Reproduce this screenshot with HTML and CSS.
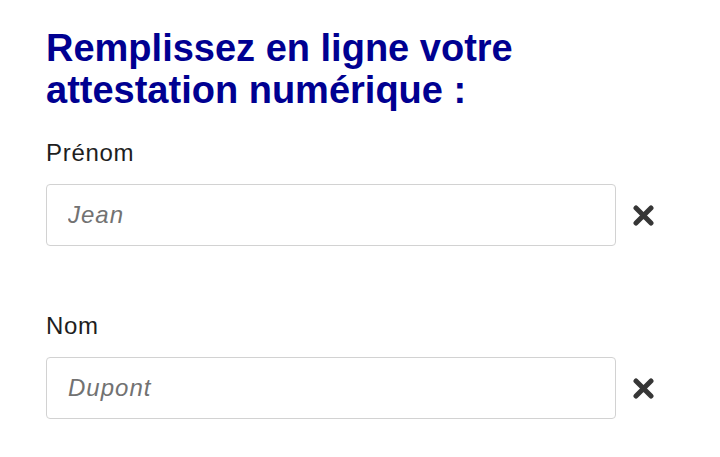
FILE: index.html
```html
<!DOCTYPE html>
<html lang="fr">
<head>
<meta charset="utf-8">
<title>Attestation numérique</title>
<link rel="stylesheet" href="styles.css">
</head>
<body>
<main class="page">
  <h1 class="title">Remplissez en ligne votre attestation numérique :</h1>
  <div class="field">
    <label class="label" for="prenom">Prénom</label>
    <div class="row">
      <input class="input" id="prenom" type="text" placeholder="Jean">
      <span class="clear" aria-label="Effacer">
        <svg width="21" height="21" viewBox="0 0 21 21"><path d="M3 3 L18 18 M18 3 L3 18" stroke="#363636" stroke-width="5" stroke-linecap="round" fill="none"/></svg>
      </span>
    </div>
  </div>
  <div class="field">
    <label class="label" for="nom">Nom</label>
    <div class="row">
      <input class="input" id="nom" type="text" placeholder="Dupont">
      <span class="clear" aria-label="Effacer">
        <svg width="21" height="21" viewBox="0 0 21 21"><path d="M3 3 L18 18 M18 3 L3 18" stroke="#363636" stroke-width="5" stroke-linecap="round" fill="none"/></svg>
      </span>
    </div>
  </div>
</main>
</body>
</html>
```
FILE: styles.css
```css
html, body {
  margin: 0;
  padding: 0;
  background: #ffffff;
}
.page {
  padding: 27px 0 0 46px;
  font-family: "Liberation Sans", Arial, sans-serif;
}
.title {
  margin: 0 0 28px 0;
  width: 520px;
  font-size: 38px;
  line-height: 42px;
  font-weight: 700;
  color: #000091;
}
.field {
  display: flex;
  flex-direction: column;
  margin-bottom: 66px;
}
.field:last-child {
  margin-bottom: 0;
}
.label {
  font-size: 24px;
  line-height: 28px;
  letter-spacing: 0.7px;
  color: #1e1e1e;
  margin-bottom: 17px;
}
.row {
  display: flex;
  align-items: center;
  gap: 17px;
}
.input {
  box-sizing: border-box;
  width: 570px;
  height: 62px;
  margin: 0;
  padding: 0 0 0 21px;
  border: 1.5px solid #d2d2d2;
  border-radius: 4px;
  background: #fff;
  font-family: "Liberation Sans", Arial, sans-serif;
  font-size: 24px;
  letter-spacing: 1px;
  color: #1e1e1e;
  outline: none;
}
.input::placeholder {
  font-style: italic;
  color: #727272;
}
.clear {
  display: flex;
  width: 21px;
  height: 21px;
}
```
